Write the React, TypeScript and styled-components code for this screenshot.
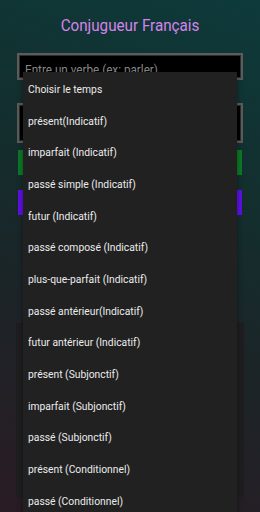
import * as React from 'react'
import styled, { createGlobalStyle } from 'styled-components'

const GlobalStyle = createGlobalStyle`
  html, body {
    margin: 0;
    padding: 0;
  }
  body {
    font-family: Roboto, 'Liberation Sans', sans-serif;
  }
`

const Screen = styled.main`
  position: relative;
  width: 260px;
  height: 512px;
  overflow: hidden;
  background: linear-gradient(200deg, #0e3a3b 0%, #12302f 30%, #1b2528 60%, #2a1b24 100%);
  display: flex;
  flex-direction: column;
  align-items: center;
`

const Title = styled.h1`
  margin: 16px 0 0;
  font-family: Roboto, 'Liberation Sans', sans-serif;
  font-weight: 400;
  font-size: 16px;
  line-height: 20px;
  color: #d684ea;
  transform: scaleX(0.95);
`

const Form = styled.section`
  width: 226px;
  margin-top: 17px;
  display: flex;
  flex-direction: column;
`

const Field = styled.div<{ $height: number }>`
  box-sizing: border-box;
  height: ${(p) => p.$height}px;
  background: #000;
  border: 2px solid #5c5c5c;
  box-shadow: inset 0 0 0 1px #2e2e2e, inset 0 2px 4px #000;
  display: flex;
  align-items: center;
  padding: 6px 6px 0;
`

const Placeholder = styled.span`
  display: inline-block;
  font-size: 13px;
  color: #8a8a8a;
  transform: scaleX(0.9);
  transform-origin: left center;
  white-space: nowrap;
`

const ActionButton = styled.div<{ $color: string; $top: number }>`
  height: 25px;
  margin: ${(p) => p.$top}px 1px 0;
  background: ${(p) => p.$color};
`

const ResultPanel = styled.div`
  width: 228px;
  height: 174px;
  margin-top: 108px;
  background: #1e1e20;
`

const Dropdown = styled.ul`
  position: absolute;
  left: 23px;
  top: 72px;
  width: 214px;
  margin: 0;
  padding: 0;
  list-style: none;
  background: #212121;
  box-shadow: 0 2px 6px rgba(0, 0, 0, 0.4);
`

const Option = styled.li`
  height: 31.7px;
  display: flex;
  align-items: center;
  padding: 2px 0 0 5px;
  box-sizing: border-box;
`

const OptionLabel = styled.span`
  display: inline-block;
  font-size: 11.6px;
  color: #ececec;
  white-space: nowrap;
  transform: scaleX(0.89);
  transform-origin: left center;
`

const tenses = [
  'Choisir le temps',
  'présent(Indicatif)',
  'imparfait (Indicatif)',
  'passé simple (Indicatif)',
  'futur (Indicatif)',
  'passé composé (Indicatif)',
  'plus-que-parfait (Indicatif)',
  'passé antérieur(Indicatif)',
  'futur antérieur (Indicatif)',
  'présent (Subjonctif)',
  'imparfait (Subjonctif)',
  'passé (Subjonctif)',
  'présent (Conditionnel)',
  'passé (Conditionnel)',
]

export default function App() {
  return (
    <>
      <GlobalStyle />
      <Screen>
        <Title>Conjugueur Français</Title>
        <Form>
          <Field $height={27}>
            <Placeholder>Entre un verbe (ex: parler)</Placeholder>
          </Field>
          <Field $height={40} style={{ marginTop: 23 }} />
          <ActionButton $color="#0b7a26" $top={7} />
          <ActionButton $color="#5f0fe6" $top={15} />
        </Form>
        <ResultPanel />
        <Dropdown>
          {tenses.map((t) => (
            <Option key={t}>
              <OptionLabel>{t}</OptionLabel>
            </Option>
          ))}
        </Dropdown>
      </Screen>
    </>
  )
}
